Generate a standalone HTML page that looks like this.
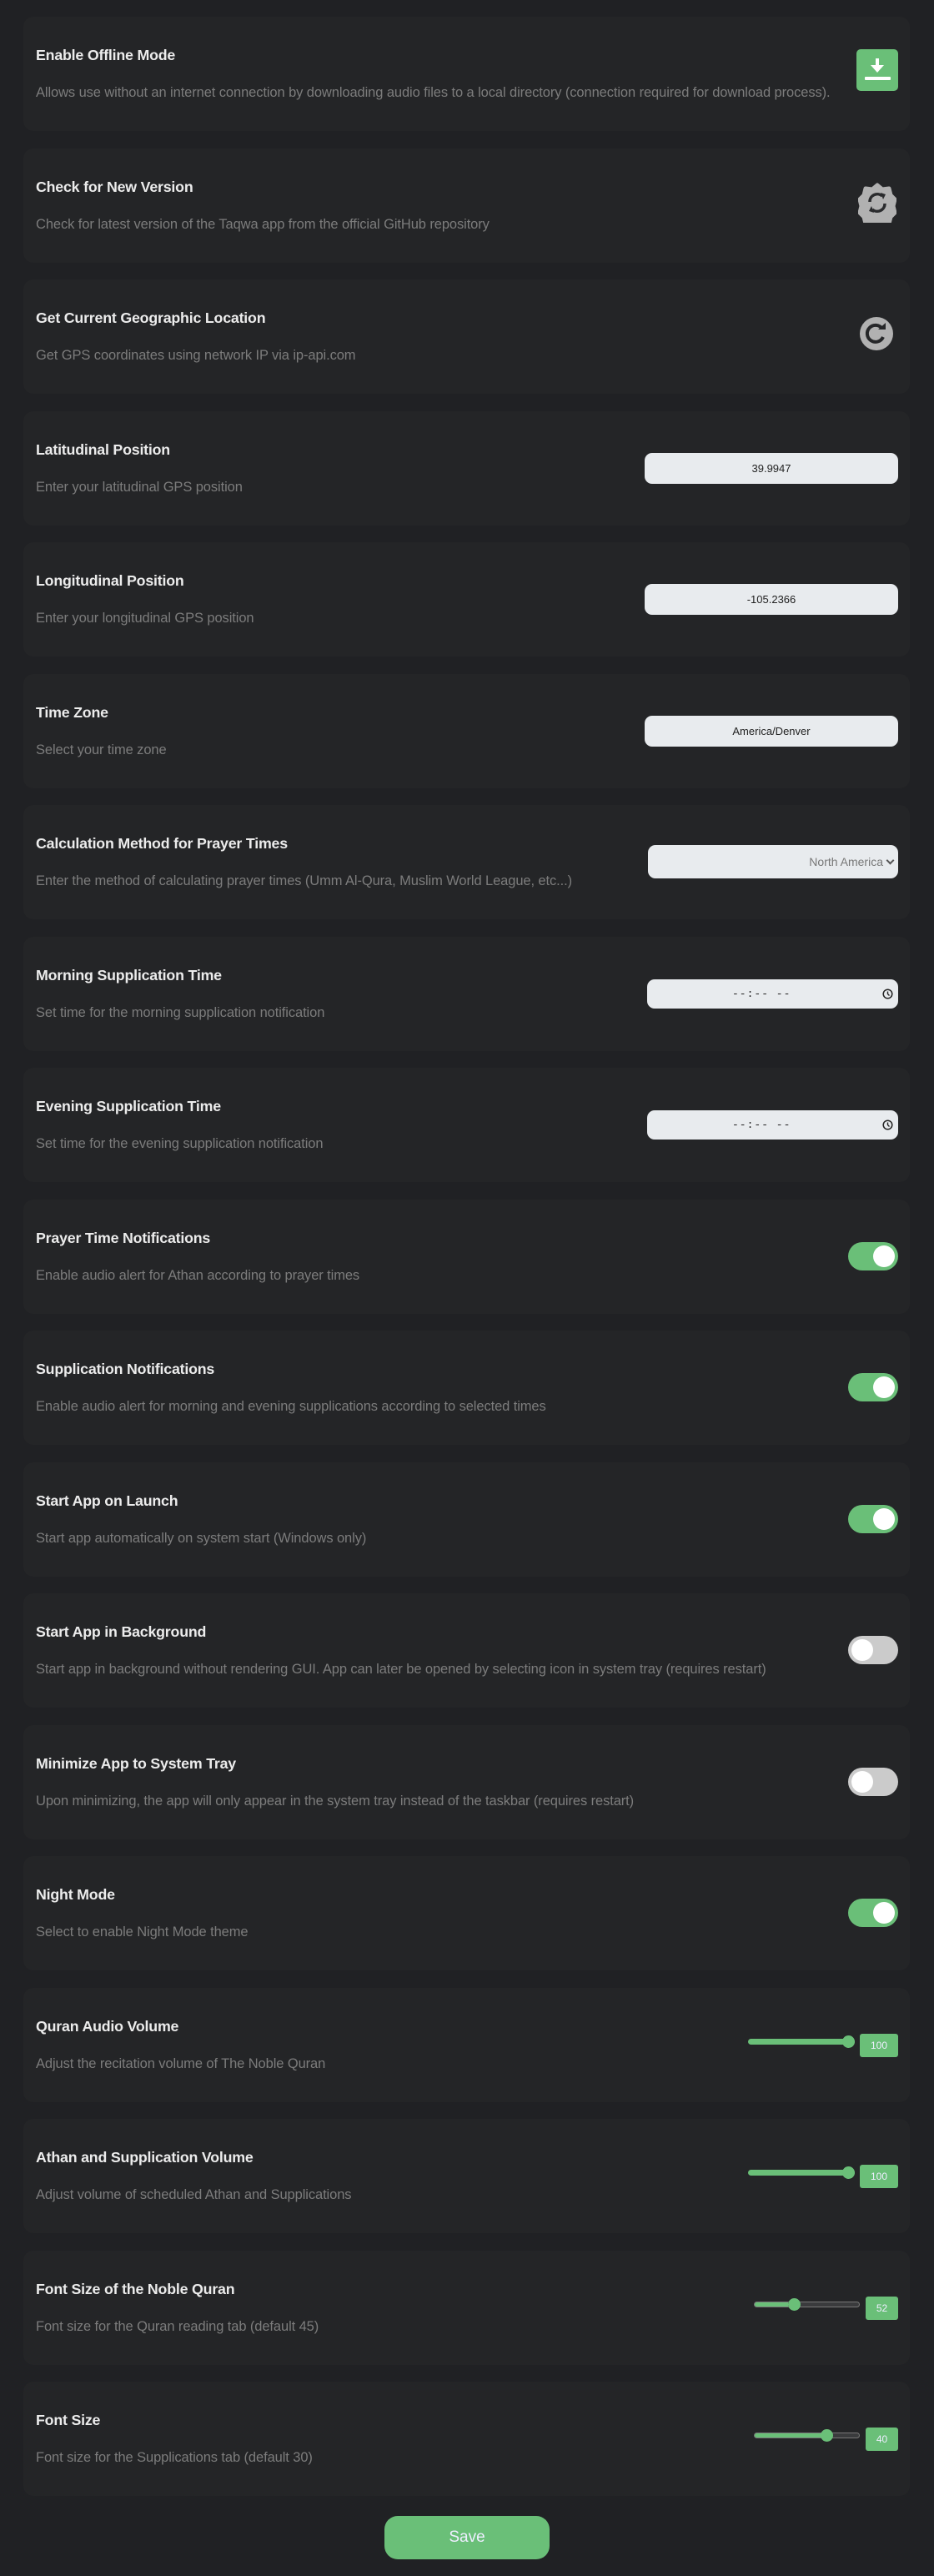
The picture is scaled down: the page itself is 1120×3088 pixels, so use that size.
<!DOCTYPE html>
<html><head><meta charset="utf-8"><style>
*{margin:0;padding:0;box-sizing:border-box}
html,body{width:1120px;height:3088px;background:#202124;overflow:hidden}
body{position:relative;font-family:"Liberation Sans",Arial,sans-serif}
.c{position:absolute;left:28px;width:1063px;height:137px;background:#242527;border-radius:12px}
.t{position:absolute;left:15px;top:36px;font-size:17.8px;font-weight:bold;color:#ececec;letter-spacing:-0.2px;white-space:nowrap}
.d{position:absolute;left:15px;top:82px;font-size:16.5px;color:#7c7c7c;letter-spacing:-0.1px;white-space:nowrap}
.in{position:absolute;left:745px;width:304px;height:37px;top:50px;background:#e8ebee;border-radius:9px;font-size:13px;color:#222;text-align:center;line-height:37px}
.sel{position:absolute;left:749px;width:300px;height:40px;top:48px;background:#e8ebee;border-radius:9px;font-size:14px;color:#777;text-align:right;padding-right:18px;line-height:40px}
.sel:after{content:"";position:absolute;right:6px;top:15px;width:5px;height:5px;border-right:2px solid #555;border-bottom:2px solid #555;transform:rotate(45deg)}
.tm{position:absolute;left:748px;width:301px;height:35px;top:51px;background:#e8ebee;border-radius:9px;font-family:"Liberation Mono",monospace;font-size:13px;color:#222;line-height:35px;padding-left:102px;letter-spacing:1px}
.tm svg{position:absolute;right:6px;top:11px}
.tg{position:absolute;left:989px;top:51px;width:60px;height:34px;border-radius:17px;background:#6abf78}
.tg:after{content:"";position:absolute;top:4px;left:30px;width:26px;height:26px;border-radius:50%;background:#fff}
.tg.off{background:#cbcbcb}
.tg.off:after{left:4px}
.tr{position:absolute;height:7px;top:61px;border-radius:4px;background:#6abf78}
.tr.p{background:linear-gradient(90deg,#6abf78 var(--v),#3a3b3d var(--v));border:1px solid #777}
.th{position:absolute;width:15px;height:15px;border-radius:50%;background:#6abf78;top:57px}
.vb{position:absolute;height:28px;top:55px;background:#6abf78;border-radius:3px;color:#eef;font-size:12px;text-align:center;line-height:28px}
</style></head><body>

<div class="c" style="top:20px"><div class="t">Enable Offline Mode</div><div class="d">Allows use without an internet connection by downloading audio files to a local directory (connection required for download process).</div>
<svg style="position:absolute;left:999px;top:39px" width="50" height="50" viewBox="0 0 50 50"><rect width="50" height="50" rx="5" fill="#6abf78"/><rect x="23" y="11" width="4" height="10" fill="#fff"/><path d="M17 19h16l-8 9z" fill="#fff"/><rect x="10" y="33" width="31" height="4" rx="1" fill="#fff"/></svg></div>

<div class="c" style="top:177.5px"><div class="t">Check for New Version</div><div class="d">Check for latest version of the Taqwa app from the official GitHub repository</div>
<svg style="position:absolute;left:1001px;top:41px" width="46" height="48" viewBox="0 0 46 48"><path d="M23 3l6 5 8-1 2 8 5 5-2 8 2 8-5 5-2 8-8-1-6 5-6-5-8 1-2-8-5-5 2-8-2-8 5-5 2-8 8 1z" fill="#b1b1b1" stroke="#b1b1b1" stroke-width="5" stroke-linejoin="round"/><path d="M14 23a9 9 0 0 1 15-7" fill="none" stroke="#2a2b2d" stroke-width="3.5"/><path d="M32 25a9 9 0 0 1-15 7" fill="none" stroke="#2a2b2d" stroke-width="3.5"/><path d="M27 12l6 2-3 6z" fill="#2a2b2d"/><path d="M19 36l-6-2 3-6z" fill="#2a2b2d"/></svg></div>

<div class="c" style="top:335px"><div class="t">Get Current Geographic Location</div><div class="d">Get GPS coordinates using network IP via ip-api.com</div>
<svg style="position:absolute;left:1003px;top:45px" width="40" height="40" viewBox="0 0 40 40"><circle cx="20" cy="20" r="20" fill="#b1b1b1"/><path d="M27 14a10 10 0 1 0 1 10" fill="none" stroke="#262729" stroke-width="4"/><path d="M22 11l9 0 0-8z" fill="#262729" transform="translate(0,4)"/></svg></div>

<div class="c" style="top:492.5px"><div class="t">Latitudinal Position</div><div class="d">Enter your latitudinal GPS position</div><div class="in">39.9947</div></div>

<div class="c" style="top:650px"><div class="t">Longitudinal Position</div><div class="d">Enter your longitudinal GPS position</div><div class="in">-105.2366</div></div>

<div class="c" style="top:807.5px"><div class="t">Time Zone</div><div class="d">Select your time zone</div><div class="in">America/Denver</div></div>

<div class="c" style="top:965px"><div class="t">Calculation Method for Prayer Times</div><div class="d">Enter the method of calculating prayer times (Umm Al-Qura, Muslim World League, etc...)</div><div class="sel">North America</div></div>

<div class="c" style="top:1122.5px"><div class="t">Morning Supplication Time</div><div class="d">Set time for the morning supplication notification</div><div class="tm">--:-- --<svg width="13" height="13" viewBox="0 0 13 13"><circle cx="6.5" cy="6.5" r="5.3" fill="none" stroke="#222" stroke-width="1.5"/><path d="M6.5 3.5v3l2 2" fill="none" stroke="#222" stroke-width="1.4"/></svg></div></div>

<div class="c" style="top:1280px"><div class="t">Evening Supplication Time</div><div class="d">Set time for the evening supplication notification</div><div class="tm">--:-- --<svg width="13" height="13" viewBox="0 0 13 13"><circle cx="6.5" cy="6.5" r="5.3" fill="none" stroke="#222" stroke-width="1.5"/><path d="M6.5 3.5v3l2 2" fill="none" stroke="#222" stroke-width="1.4"/></svg></div></div>

<div class="c" style="top:1437.5px"><div class="t">Prayer Time Notifications</div><div class="d">Enable audio alert for Athan according to prayer times</div><div class="tg"></div></div>

<div class="c" style="top:1595px"><div class="t">Supplication Notifications</div><div class="d">Enable audio alert for morning and evening supplications according to selected times</div><div class="tg"></div></div>

<div class="c" style="top:1752.5px"><div class="t">Start App on Launch</div><div class="d">Start app automatically on system start (Windows only)</div><div class="tg"></div></div>

<div class="c" style="top:1910px"><div class="t">Start App in Background</div><div class="d">Start app in background without rendering GUI. App can later be opened by selecting icon in system tray (requires restart)</div><div class="tg off"></div></div>

<div class="c" style="top:2067.5px"><div class="t">Minimize App to System Tray</div><div class="d">Upon minimizing, the app will only appear in the system tray instead of the taskbar (requires restart)</div><div class="tg off"></div></div>

<div class="c" style="top:2225px"><div class="t">Night Mode</div><div class="d">Select to enable Night Mode theme</div><div class="tg"></div></div>

<div class="c" style="top:2382.5px"><div class="t">Quran Audio Volume</div><div class="d">Adjust the recitation volume of The Noble Quran</div><div class="tr" style="left:869px;width:128px"></div><div class="th" style="left:982px"></div><div class="vb" style="left:1003px;width:46px">100</div></div>

<div class="c" style="top:2540px"><div class="t">Athan and Supplication Volume</div><div class="d">Adjust volume of scheduled Athan and Supplications</div><div class="tr" style="left:869px;width:128px"></div><div class="th" style="left:982px"></div><div class="vb" style="left:1003px;width:46px">100</div></div>

<div class="c" style="top:2697.5px"><div class="t">Font Size of the Noble Quran</div><div class="d">Font size for the Quran reading tab (default 45)</div><div class="tr p" style="left:876px;width:127px;--v:40px"></div><div class="th" style="left:917px"></div><div class="vb" style="left:1010px;width:39px">52</div></div>

<div class="c" style="top:2855px"><div class="t">Font Size</div><div class="d">Font size for the Supplications tab (default 30)</div><div class="tr p" style="left:876px;width:127px;--v:90px"></div><div class="th" style="left:956px"></div><div class="vb" style="left:1010px;width:39px">40</div></div>

<div style="position:absolute;left:461px;top:3016px;width:198px;height:52px;border-radius:16px;background:#6abf78;color:#eef;font-size:19px;text-align:center;line-height:52px">Save</div>
</body></html>
